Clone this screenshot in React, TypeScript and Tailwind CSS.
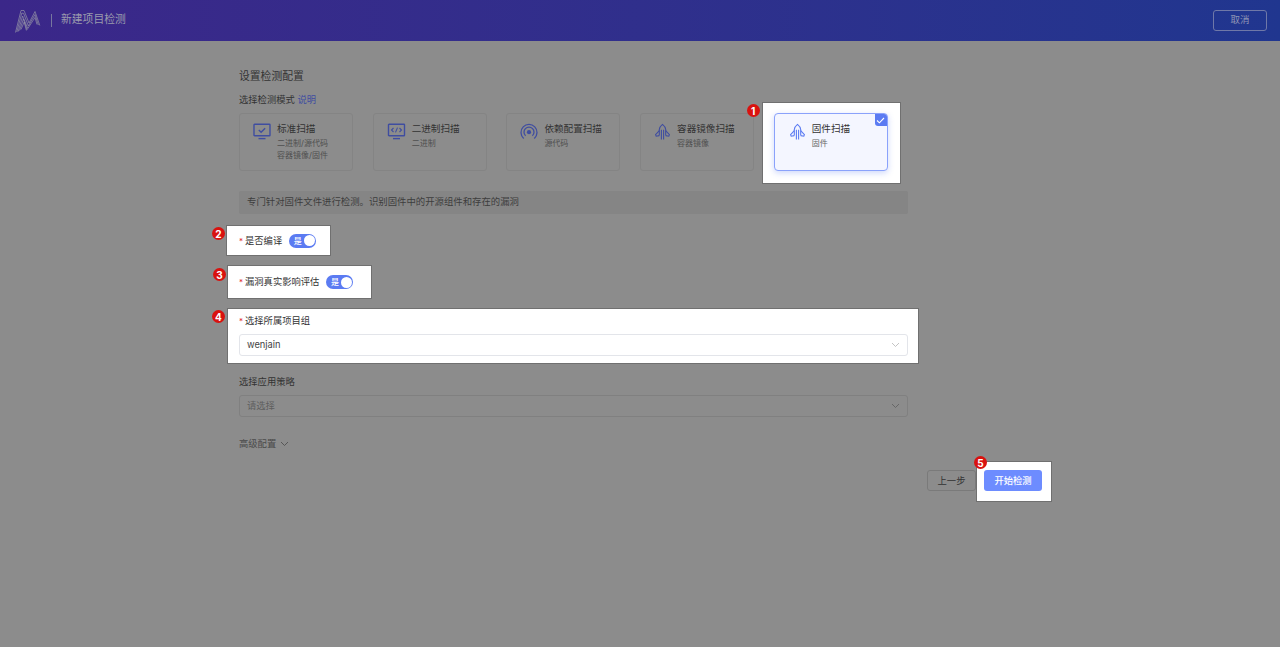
import React from "react";

const font = { fontFamily: '"Inter", "Noto Sans CJK SC", sans-serif' };

function Monitor({ code }: { code?: boolean }) {
  return (
    <svg width={code ? 19 : 18} height="18" viewBox="0 0 18 18" fill="none" className="shrink-0">
      <rect x="1" y="1.2" width="16" height="11.6" rx="0.6" stroke="currentColor" strokeWidth="1.4" />
      <path d="M5.5 15.6h7" stroke="currentColor" strokeWidth="1.4" />
      {code ? (
        <path d="M6 5l-2 2 2 2M12 5l2 2-2 2M10 4.6L8 9.4" stroke="currentColor" strokeWidth="1.1" />
      ) : (
        <path d="M5.8 7l2.3 2.2 4-4" stroke="currentColor" strokeWidth="1.4" />
      )}
    </svg>
  );
}

function Waves() {
  return (
    <svg width="18" height="18" viewBox="0 0 18 18" fill="none" className="shrink-0">
      <path d="M3.7 15.4A8 8 0 1 1 14.3 15.4" stroke="currentColor" strokeWidth="1.3" />
      <path d="M5.6 12.8A5 5 0 1 1 12.4 12.8" stroke="currentColor" strokeWidth="1.3" />
      <circle cx="9" cy="9.2" r="2.1" fill="currentColor" />
    </svg>
  );
}

function Rocket() {
  return (
    <svg width="17" height="18" viewBox="0 0 17 18" fill="none" className="shrink-0">
      <path d="M5.3 12.6V6.6C5.3 4.8 7 2.6 8.5 1.4 10 2.6 11.7 4.8 11.7 6.6V12.6" stroke="currentColor" strokeWidth="1.1" />
      <path d="M7.4 6.8V16.4M9.6 6.8V16.4" stroke="currentColor" strokeWidth="1.1" />
      <path d="M5.3 7.6L1.6 11.6 2.2 13.2 5.3 12.6M11.7 7.6L15.4 11.6 14.8 13.2 11.7 12.6" stroke="currentColor" strokeWidth="1.1" />
    </svg>
  );
}

function Logo() {
  return (
    <svg width="26" height="24" viewBox="0 0 26 24" fill="none" className="shrink-0">
      <g stroke="#9a9aa8" strokeWidth="0.65">
        <path d="M0.5 23.5L6 1.5 9 1.5 14 14" />
        <path d="M1.8 23L6.8 4 8.6 4.4 13.4 17" />
        <path d="M3.2 22.5L7.6 7 12.8 19.5" />
        <path d="M4.6 21.5L8.4 10 12.2 21" />
        <path d="M6 20.5L9.2 13 11.4 21.5" />
        <path d="M14 14L20 2.5 24.8 16.5" />
        <path d="M13.4 17L20 5.5 23.4 16" />
        <path d="M12.8 19.5L20 8.5 22 15.5" />
      </g>
    </svg>
  );
}

function Chevron() {
  return (
    <svg width="9" height="6" viewBox="0 0 9 6" fill="none">
      <path d="M1 1l3.5 3.5L8 1" stroke="currentColor" strokeWidth="0.8" />
    </svg>
  );
}

function Badge({ n, className }: { n: number; className: string }) {
  return (
    <span className={`absolute z-20 flex h-[13px] w-[13px] items-center justify-center rounded-full bg-[#d9120f] text-[10px] font-bold leading-none text-white ${className}`}>
      {n}
    </span>
  );
}

function ModeCard({ icon, title, lines }: { icon: React.ReactNode; title: string; lines: string[] }) {
  return (
    <div className="flex h-[58px] w-[114px] gap-[6px] rounded-[3px] border border-[#848484] pl-[13px] pt-[8px] text-[#3f4da0]">
      <div className="pt-px">{icon}</div>
      <div>
        <div className="text-[9.6px] leading-[14px] text-[#333333]">{title}</div>
        <div className="pt-px">
          {lines.map((l) => (
            <div key={l} className="text-[8px] leading-[12px] text-[#4f4f4f]">{l}</div>
          ))}
        </div>
      </div>
    </div>
  );
}

function Toggle() {
  return (
    <span className="flex h-[14px] w-[27px] items-center justify-between rounded-full bg-[#5b7bf2] pl-[4.5px] pr-[1.5px]">
      <span className="whitespace-nowrap text-[8px] font-medium leading-none text-white">是</span>
      <span className="h-[11px] w-[11px] shrink-0 rounded-full bg-white" />
    </span>
  );
}

function Req({ children }: { children: React.ReactNode }) {
  return (
    <span className="flex items-center gap-[2px] text-[9.3px] text-[#333333]">
      <span className="text-[8px] text-[#e0282e]">*</span>
      {children}
    </span>
  );
}

const boxed = "relative bg-white border border-[#707070]";

export default function App() {
  return (
    <div style={font} className="flex min-h-[647px] flex-col bg-[#8c8c8c]">
      <header className="flex h-[41px] items-center justify-between bg-gradient-to-r from-[#3b2789] to-[#20368f] pl-[15px] pr-[13px]">
        <div className="flex items-center">
          <Logo />
          <span className="ml-[10px] h-[13px] w-px bg-[#77779f]" />
          <span className="ml-[9px] text-[10.8px] text-[#9b9bad]">新建项目检测</span>
        </div>
        <button className="h-[21px] w-[54px] rounded-[3px] border border-[#6f78a8] text-[9.5px] text-[#8f95b5]">取消</button>
      </header>

      <main className="ml-[239px] flex w-[669px] flex-col">
        <h2 className="mt-[28px] text-[10.8px] font-normal leading-[16px] text-[#333333]">设置检测配置</h2>
        <div className="mt-[8px] text-[9.3px] leading-[14px] text-[#333333]">
          选择检测模式 <span className="text-[#3f4da0]">说明</span>
        </div>

        <div className="mt-[6px] flex gap-[19.7px]">
          <ModeCard icon={<Monitor />} title="标准扫描" lines={["二进制/源代码", "容器镜像/固件"]} />
          <ModeCard icon={<Monitor code />} title="二进制扫描" lines={["二进制"]} />
          <ModeCard icon={<Waves />} title="依赖配置扫描" lines={["源代码"]} />
          <ModeCard icon={<Rocket />} title="容器镜像扫描" lines={["容器镜像"]} />
          <div className="relative h-[58px] w-[114px]">
            <div className="absolute -bottom-[13px] -left-[12px] -right-[13px] -top-[11px] border border-[#707070] bg-white" />
            <Badge n={1} className="-left-[27px] -top-[9px]" />
            <div className="relative flex h-full gap-[6px] overflow-hidden rounded-[4px] border border-[#8aa2fb] bg-[#f4f6ff] pl-[14px] pt-[8px] text-[#5b7bf2] shadow-[0_2px_6px_rgba(91,123,242,0.3)]">
              <div className="pt-px"><Rocket /></div>
              <div>
                <div className="text-[9.6px] leading-[14px] text-[#333333]">固件扫描</div>
                <div className="pt-px text-[8px] leading-[12px] text-[#666666]">固件</div>
              </div>
              <span className="absolute right-0 top-0 flex h-[12px] w-[12px] items-center justify-center rounded-bl-[3px] bg-[#5b7bf2]">
                <svg width="9" height="7" viewBox="0 0 9 7" fill="none"><path d="M1 3.5L3.4 5.8 8 1" stroke="white" strokeWidth="1.1" /></svg>
              </span>
            </div>
          </div>
        </div>

        <div className="mt-[20px] flex h-[23px] items-center rounded-[2px] bg-[#858585] pl-[8px] text-[9.38px] text-[#3d3d3d]">
          专门针对固件文件进行检测。识别固件中的开源组件和存在的漏洞
        </div>

        <div className={`${boxed} -ml-[13px] mt-[11px] flex h-[31px] w-[105px] items-center gap-[7px] pl-[12px]`}>
          <Badge n={2} className="-left-[15px] top-[1px]" />
          <Req>是否编译</Req>
          <Toggle />
        </div>

        <div className={`${boxed} -ml-[12px] mt-[9px] flex h-[34px] w-[145px] items-center gap-[7px] pl-[11px]`}>
          <Badge n={3} className="-left-[15px] top-[2px]" />
          <Req>漏洞真实影响评估</Req>
          <Toggle />
        </div>

        <div className={`${boxed} -ml-[12px] mt-[9px] h-[56px] w-[692px] pl-[11px] pr-[10px] pt-[5px]`}>
          <Badge n={4} className="-left-[16px] top-[1px]" />
          <div className="h-[14px] leading-[14px]"><Req>选择所属项目组</Req></div>
          <div className="mt-[6px] flex h-[22px] items-center justify-between rounded-[3px] border border-[#e3e5ea] pl-[7px] pr-[7px] text-[9.3px] text-[#444444]">
            <span>wenjain</span>
            <span className="text-[#b5b5b5]"><Chevron /></span>
          </div>
        </div>

        <div className="mt-[11px] text-[9.3px] leading-[14px] text-[#333333]">选择应用策略</div>
        <div className="mt-[6px] flex h-[22px] items-center justify-between rounded-[3px] border border-[#808080] pl-[7px] pr-[7px] text-[9.3px] text-[#5e5e5e]">
          <span>请选择</span>
          <span className="text-[#5e5e5e]"><Chevron /></span>
        </div>

        <div className="mt-[20px] flex items-center gap-[4px] text-[9.3px] leading-[14px] text-[#4a4a4a]">
          高级配置 <Chevron />
        </div>
      </main>

      <div className="ml-[927px] mt-[10px] flex items-start">
        <button className="mt-[9px] block h-[21px] w-[49px] rounded-[3px] border border-[#7a7a7a] text-[9.3px] text-[#333333]">上一步</button>
        <div className={`${boxed} h-[41px] w-[76px] pl-[7px] pt-[8px]`}>
          <Badge n={5} className="-left-[3px] -top-[6px]" />
          <button className="block h-[21px] w-[58px] rounded-[3px] bg-[#6d8cff] text-[9.3px] font-medium text-white">开始检测</button>
        </div>
      </div>
    </div>
  );
}
